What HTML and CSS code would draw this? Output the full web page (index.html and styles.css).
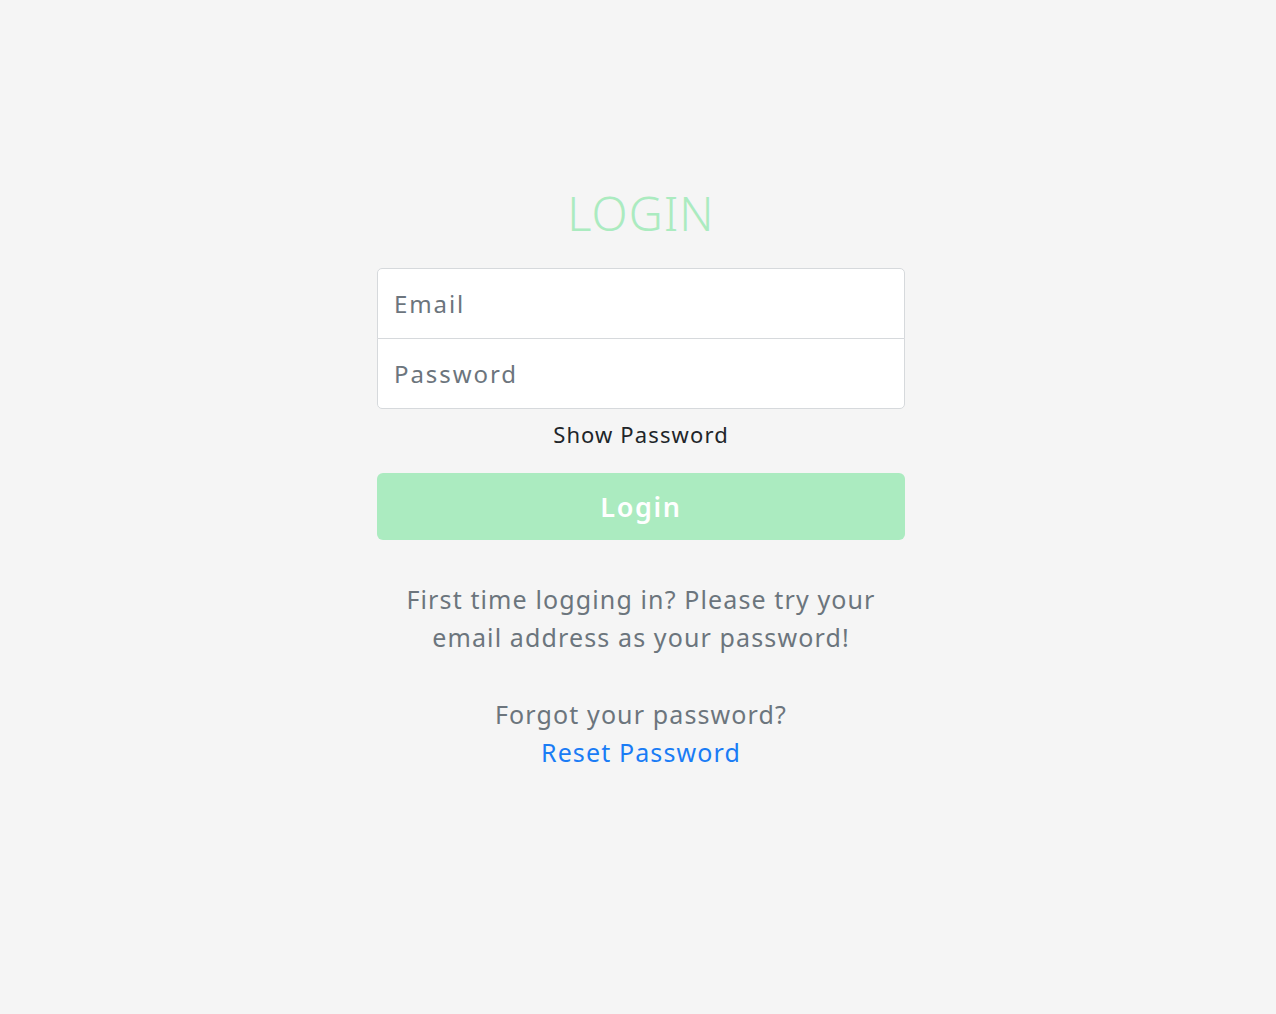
FILE: index.html
```html
<!DOCTYPE html>
<html lang="en">
<head>
<meta charset="utf-8">
<title>Login</title>
<link rel="stylesheet" href="styles.css">
</head>
<body>
<main class="page">
  <form class="login" onsubmit="return false;">
    <h1 class="title">LOGIN</h1>
    <div class="fields">
      <input class="field field-top" type="email" placeholder="Email">
      <input class="field field-bottom" type="password" placeholder="Password">
    </div>
    <div class="show">Show Password</div>
    <button class="btn" type="submit">Login</button>
    <p class="note">First time logging in? Please try your<br>email address as your password!</p>
    <p class="note forgot">Forgot your password?<br><a class="link" href="#">Reset Password</a></p>
  </form>
</main>
</body>
</html>
```
FILE: styles.css
```css
* { box-sizing: border-box; }
html, body { margin: 0; padding: 0; }
body {
  background: #f5f5f5;
  font-family: "Noto Sans", "Open Sans", sans-serif;
  color: #6c757d;
  letter-spacing: 0.07em;
}
.page {
  display: flex;
  justify-content: center;
  padding-top: 184px;
  padding-left: 6px;
}
.login {
  width: 528px;
  display: flex;
  flex-direction: column;
  align-items: stretch;
  text-align: center;
}
.title {
  margin: 0 0 26px;
  font-weight: 300;
  font-size: 47px;
  line-height: 58px;
  color: #abebc0;
  letter-spacing: 1px;
}
.fields {
  display: flex;
  flex-direction: column;
}
.field {
  height: 71px;
  width: 100%;
  margin: 0;
  border: 1px solid #d6d9dc;
  background: #fff;
  font-family: inherit;
  font-size: 24px;
  letter-spacing: 0.08em;
  padding: 0 16px;
  color: #495057;
  outline: none;
}
.field::placeholder { color: #6c757d; }
.field-top { border-radius: 5px 5px 0 0; }
.field-bottom { border-radius: 0 0 5px 5px; margin-top: -1px; }
.show {
  margin-top: 10px;
  font-size: 22px;
  line-height: 30px;
  color: #212529;
}
.btn {
  margin-top: 24px;
  height: 67px;
  border: 0;
  border-radius: 6px;
  background: #abebc0;
  color: #fff;
  font-family: inherit;
  font-weight: 600;
  font-size: 27px;
  letter-spacing: 0.06em;
}
.note {
  margin: 40px 0 0;
  font-size: 25px;
  line-height: 38px;
}
.forgot { margin-top: 39px; }
.link { color: #1a7cf5; text-decoration: none; }
```
